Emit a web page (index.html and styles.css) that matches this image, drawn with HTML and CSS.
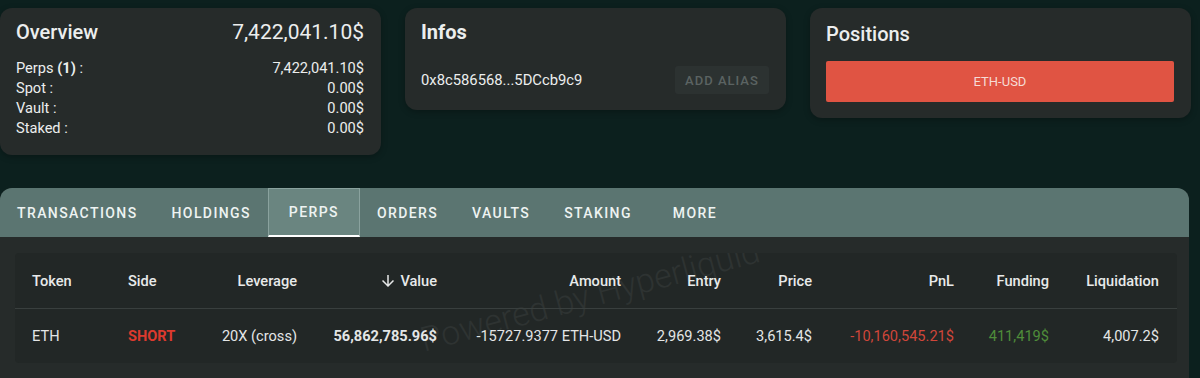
FILE: index.html
```html
<!DOCTYPE html>
<html>
  <head>
    <meta charset="utf-8">
    <title>Wallet Overview</title>
    <link rel="stylesheet" href="styles.css">
  </head>

  <body>
    <div class="top-row">
      <div class="card overview">
        <div class="card-head">
          <h2>Overview</h2>
          <span class="total">7,422,041.10$</span>
        </div>
        <div class="lines">
          <div class="line"><span>Perps <b>(1)</b> :</span><span>7,422,041.10$</span></div>
          <div class="line"><span>Spot :</span><span>0.00$</span></div>
          <div class="line"><span>Vault :</span><span>0.00$</span></div>
          <div class="line"><span>Staked :</span><span>0.00$</span></div>
        </div>
      </div>

      <div class="card infos">
        <div class="card-head">
          <h2 class="bold">Infos</h2>
        </div>
        <div class="address-row">
          <span>0x8c586568...5DCcb9c9</span>
          <button class="alias-button">Add alias</button>
        </div>
      </div>

      <div class="card positions">
        <div class="card-head">
          <h2>Positions</h2>
        </div>
        <button class="position-button">ETH-USD</button>
      </div>
    </div>

    <div class="panel">
      <div class="tabs">
        <div class="tab">Transactions</div>
        <div class="tab">Holdings</div>
        <div class="tab active">Perps</div>
        <div class="tab">Orders</div>
        <div class="tab">Vaults</div>
        <div class="tab">Staking</div>
        <div class="tab">More</div>
      </div>

      <div class="table-wrap">
        <div class="table-box">
          <span class="watermark">Powered by Hyperliquid</span>
          <table>
            <colgroup>
              <col style="width:97px">
              <col style="width:88px">
              <col style="width:113px">
              <col style="width:140px">
              <col style="width:184px">
              <col style="width:100px">
              <col style="width:91px">
              <col style="width:142px">
              <col style="width:95px">
              <col style="width:112px">
            </colgroup>
            <thead>
              <tr>
                <th class="left first">Token</th>
                <th class="left">Side</th>
                <th>Leverage</th>
                <th>
                  <span class="sort">
                    <svg viewBox="0 0 24 24" width="18" height="18"><path d="M20 12l-1.41-1.41L13 16.17V4h-2v12.17l-5.58-5.59L4 12l8 8 8-8z" fill="#e6e8e8"/></svg>
                    <span>Value</span>
                  </span>
                </th>
                <th>Amount</th>
                <th>Entry</th>
                <th>Price</th>
                <th>PnL</th>
                <th>Funding</th>
                <th class="last">Liquidation</th>
              </tr>
            </thead>
            <tbody>
              <tr>
                <td class="left first">ETH</td>
                <td class="left short">SHORT</td>
                <td>20X (cross)</td>
                <td class="strong">56,862,785.96$</td>
                <td>-15727.9377 ETH-USD</td>
                <td>2,969.38$</td>
                <td>3,615.4$</td>
                <td class="loss">-10,160,545.21$</td>
                <td class="gain">411,419$</td>
                <td class="last">4,007.2$</td>
              </tr>
            </tbody>
          </table>
        </div>
      </div>
    </div>
  </body>
</html>
```

FILE: styles.css
```css
body {
  margin: 0;
  background-color: #0c201e;
  color: #eceeee;
  font-family: Roboto, 'Liberation Sans', Arial, sans-serif;
  padding-top: 8px;
  overflow: hidden;
}

.top-row {
  display: flex;
  align-items: flex-start;
  gap: 24px;
  width: 1191px;
}

.card {
  width: 381px;
  box-sizing: border-box;
  background-color: #262b2a;
  border-radius: 12px;
  box-shadow: 0 2px 6px rgba(0, 0, 0, 0.25);
  padding: 12px 17px 16px 16px;
}

.card-head {
  display: flex;
  justify-content: space-between;
  align-items: center;
  height: 24px;
}

.card h2 {
  margin: 0;
  font-size: 20px;
  font-weight: 500;
  line-height: 24px;
}

.card h2.bold {
  font-weight: 700;
}

.total {
  font-size: 21px;
  line-height: 24px;
}

.lines {
  margin-top: 14px;
  padding-bottom: 1px;
}

.line {
  display: flex;
  justify-content: space-between;
  font-size: 14.6px;
  line-height: 20px;
}

.address-row {
  display: flex;
  justify-content: space-between;
  align-items: center;
  margin-top: 22px;
  font-size: 14.8px;
}

.alias-button {
  width: 94px;
  height: 28px;
  border: none;
  border-radius: 3px;
  background-color: #2c3231;
  color: #5b6362;
  font-family: inherit;
  font-size: 13px;
  font-weight: 500;
  letter-spacing: 1px;
  text-transform: uppercase;
}

.positions {
  padding-top: 14px;
}

.position-button {
  display: block;
  width: 100%;
  height: 41px;
  margin-top: 15px;
  border: none;
  border-radius: 2px;
  background-color: #e05443;
  color: #f6dcd5;
  font-family: inherit;
  font-size: 13px;
}

.panel {
  width: 1189px;
  margin-top: 33px;
  background-color: #262b2a;
  border-radius: 12px 12px 0 0;
  padding-bottom: 30px;
}

.tabs {
  display: flex;
  height: 49px;
  background-color: #5b7571;
  border-radius: 12px 12px 0 0;
}

.tab {
  display: flex;
  align-items: center;
  justify-content: center;
  min-width: 92px;
  box-sizing: border-box;
  padding: 0 17px;
  font-size: 14px;
  font-weight: 500;
  letter-spacing: 1.4px;
  text-transform: uppercase;
  color: #eef3f2;
}

.tab.active {
  background-color: #6a8580;
  border: 1px solid #8aa29e;
  border-bottom: 2px solid #ffffff;
}

.table-wrap {
  padding: 16px 12px 0 15px;
}

.table-box {
  position: relative;
  width: 1162px;
  background-color: #222726;
  border-radius: 4px;
  overflow: hidden;
}

table {
  width: 100%;
  table-layout: fixed;
  border-collapse: collapse;
  position: relative;
}

th, td {
  text-align: right;
  padding: 0 16px;
  font-size: 14.6px;
  white-space: nowrap;
}

th {
  height: 55px;
  font-weight: 500;
  color: #e8eaea;
  border-bottom: 1px solid #393f3e;
}

td {
  height: 54px;
  color: #e4e6e6;
}

.left {
  text-align: left;
}

.first {
  padding-left: 17px;
}

.last {
  padding-right: 18px;
}

.sort {
  display: inline-flex;
  align-items: center;
  gap: 3px;
  vertical-align: middle;
}

.short {
  color: #dc3a2e;
  font-weight: 700;
}

.strong {
  font-weight: 700;
}

.loss {
  color: #d0463a;
}

.gain {
  color: #4f8d3a;
}

.watermark {
  position: absolute;
  left: 400px;
  top: 22px;
  font-size: 34px;
  font-weight: 300;
  color: #2e3332;
  transform: rotate(-15deg);
  white-space: nowrap;
}
```
